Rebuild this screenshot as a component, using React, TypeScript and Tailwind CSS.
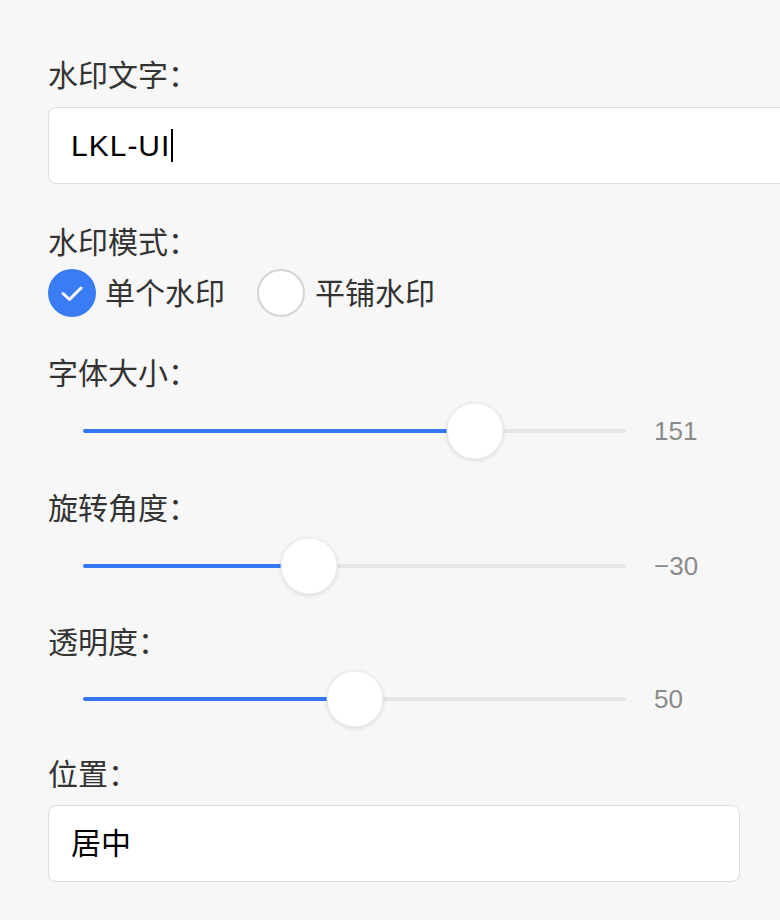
const font = "font-['Liberation_Sans','Noto_Sans_CJK_SC',sans-serif]";

const Label = ({ children, className = "" }: { children: React.ReactNode; className?: string }) => (
  <div className={`h-9 leading-9 text-[30px] text-[#333] font-['Noto_Sans_CJK_SC',sans-serif] ${className}`}>{children}</div>
);

const Slider = ({ pct, value, className = "" }: { pct: number; value: string; className?: string }) => (
  <div className={`flex items-center h-[58px] ${className}`}>
    <div className="relative ml-[35px] w-[543px] h-[4px] rounded-full bg-[#e6e6e6]">
      <div className="h-full rounded-full bg-[#3478f6]" style={{ width: `${pct}%` }} />
      <div
        className="absolute top-1/2 w-[57px] h-[57px] -translate-x-1/2 -translate-y-1/2 rounded-full bg-white border border-[#ececec] shadow-[0_1px_4px_rgba(0,0,0,0.12)]"
        style={{ left: `${pct}%` }}
      />
    </div>
    <span className="ml-[28px] text-[26px] text-[#8a8a8a]">{value}</span>
  </div>
);

export default function App() {
  return (
    <div className={`min-h-screen w-full overflow-hidden bg-[#f7f7f7] pl-12 pt-[55px] ${font}`}>
      <Label>水印文字：</Label>
      <div className="mt-4 flex items-center h-[77px] w-[760px] rounded-lg border border-[#dcdcdc] bg-white pl-[22px] text-[30px] tracking-[1px] text-black">
        <span>LKL-UI</span>
        <span className="ml-[1px] inline-block w-[2px] h-[33px] bg-black" />
      </div>

      <Label className="mt-[38px]">水印模式：</Label>
      <div className="mt-[11px] flex items-center h-12">
        <span className="flex items-center justify-center w-12 h-12 rounded-full bg-[#3a7cf4]">
          <svg width="26" height="20" viewBox="0 0 26 20" fill="none">
            <path d="M4 10.5l6.5 6L22 5" stroke="white" strokeWidth="3" strokeLinecap="round" strokeLinejoin="round" />
          </svg>
        </span>
        <span className="ml-[9px] text-[30px] text-[#333]">单个水印</span>
        <span className="ml-[32px] w-12 h-12 rounded-full bg-white border-2 border-[#d4d4d4]" />
        <span className="ml-[10px] text-[30px] text-[#333]">平铺水印</span>
      </div>

      <Label className="mt-9">字体大小：</Label>
      <Slider className="mt-[13px]" pct={72.2} value="151" />

      <Label className="mt-7">旋转角度：</Label>
      <Slider className="mt-[13px]" pct={41.7} value="−30" />

      <Label className="mt-[27px]">透明度：</Label>
      <Slider className="mt-3" pct={50.1} value="50" />

      <Label className="mt-[26px]">位置：</Label>
      <div className="mt-[15px] flex items-center h-[77px] w-[692px] rounded-lg border border-[#dcdcdc] bg-white pl-[22px] text-[30px] text-black">
        居中
      </div>
    </div>
  );
}
